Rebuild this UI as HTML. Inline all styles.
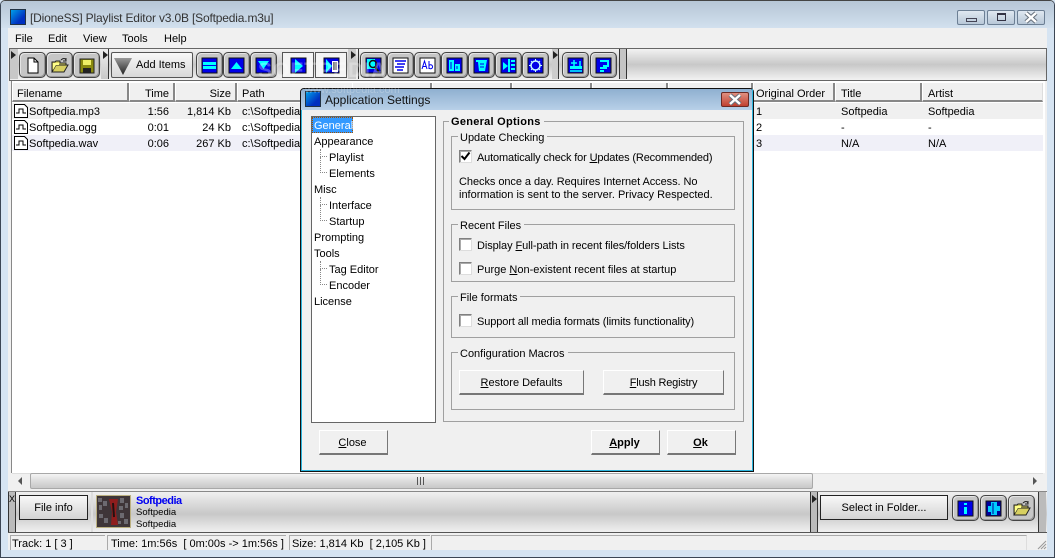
<!DOCTYPE html>
<html><head><meta charset="utf-8"><style>
html,body{margin:0;padding:0;width:1055px;height:558px;overflow:hidden;background:#d6e4f2}
*{box-sizing:border-box}
div,span.t,svg{position:absolute}
.t{position:absolute;white-space:pre;font:11px/13px "Liberation Sans",sans-serif;color:#000;margin-top:2px}
.r{text-align:right}
.c{text-align:center}
.b{font-weight:bold}
u{text-decoration:underline}
.rb{width:27px;height:26px;top:52px;border:1px solid #444;border-radius:5px;background:#c6c6c6;box-shadow:inset 1px 1px 0 #e4e4e4,inset -1px -1px 0 #999}
.sb{height:26px;top:52px;border:1px solid #555;background:linear-gradient(#f8f8f8,#d8d8d8)}
.ic{position:absolute;left:4px;top:4px}
.hd{top:83px;height:19px;background:#f0f0f0;border-right:2px solid #888;border-left:1px solid #fff;border-bottom:2px solid #888}
.grp{border:1px solid #a0a0a0;background:#f0f0f0}
.lab{background:#f0f0f0;padding:0 3px 0 2px;position:absolute}
.btn{background:#f0f0f0;border:1px solid #fff;border-right:1px solid #777;border-bottom:2px solid #777}
.cb{width:13px;height:13px;background:#fff;border:1px solid #808080;border-right-color:#ddd;border-bottom-color:#ddd;box-shadow:inset 1px 1px 0 #aaa}
.grip{top:49px;height:30px;background:#c8c8c8}
.tri{width:0;height:0;border-left:5px solid #222;border-top:4px solid transparent;border-bottom:4px solid transparent}
.dot{border-left:1px dotted #888;border-bottom:1px dotted #888}
</style></head><body>
<!-- window chrome -->
<div style="left:0;top:0;width:1055px;height:558px;background:#d6e4f2;border:1px solid #3c4654;border-top:1px solid #444;border-radius:5px 5px 0 0"></div>
<div style="left:1px;top:1px;width:1053px;height:27px;background:linear-gradient(#b6c6d6,#d2e0ee);border-radius:4px 4px 0 0"></div>
<div style="left:10px;top:9px;width:16px;height:16px;background:linear-gradient(135deg,#00a0e8,#0030c0 70%);border:1px solid #234"></div>
<span class="t" style="left:30px;top:10px;font-size:12px;color:#333;letter-spacing:-.17px">[DioneSS] Playlist Editor v3.0B [Softpedia.m3u]</span>
<!-- caption buttons -->
<div style="left:957px;top:10px;width:28px;height:15px;border:1px solid #6c7f94;border-radius:2px;background:linear-gradient(#dfe8f1,#b8c8d8)"><div style="left:8px;top:7px;width:11px;height:4px;border:1px solid #445"></div></div>
<div style="left:987px;top:10px;width:28px;height:15px;border:1px solid #6c7f94;border-radius:2px;background:linear-gradient(#dfe8f1,#b8c8d8)"><div style="left:9px;top:2px;width:9px;height:8px;border:1px solid #334;border-top-width:2px"></div></div>
<div style="left:1017px;top:10px;width:28px;height:15px;border:1px solid #6c7f94;border-radius:2px;background:linear-gradient(#dfe8f1,#b8c8d8)"><svg width="26" height="13" style="left:0;top:0"><path d="M8 2l10 9M18 2L8 11" stroke="#66707c" stroke-width="4.400"/><path d="M8 2l10 9M18 2L8 11" stroke="#fff" stroke-width="2.400" fill="none"/></svg></div>
<!-- client -->
<div style="left:8px;top:28px;width:1039px;height:522px;background:#f0f0f0"></div>
<span class="t" style="left:15px;top:31px">File</span>
<span class="t" style="left:48px;top:31px">Edit</span>
<span class="t" style="left:83px;top:31px">View</span>
<span class="t" style="left:122px;top:31px">Tools</span>
<span class="t" style="left:164px;top:31px">Help</span>
<!-- toolbar -->
<div style="left:9px;top:48px;width:1038px;height:33px;border:1px solid #666;background:linear-gradient(#f2f2f2,#c8c8c8 50%,#f2f2f2)"></div>
<div class="grip" style="left:10px;width:8px"></div><div class="tri" style="left:11px;top:51px"></div>
<div class="grip" style="left:101px;width:7px;background:linear-gradient(#eee,#c8c8c8)"></div><div class="tri" style="left:103px;top:51px"></div>
<div class="grip" style="left:348px;width:8px;background:#ccc"></div><div class="tri" style="left:351px;top:51px"></div>
<div class="grip" style="left:552px;width:7px;background:#ccc"></div><div class="tri" style="left:553px;top:51px"></div>
<div style="left:108px;top:49px;width:1px;height:30px;background:#333"></div>
<div style="left:358px;top:49px;width:1px;height:30px;background:#333"></div>
<div style="left:558px;top:49px;width:1px;height:30px;background:#333"></div>
<div style="left:619px;top:49px;width:1px;height:30px;background:#333"></div>
<div style="left:626px;top:49px;width:1px;height:30px;background:#333"></div>
<div style="left:620px;top:49px;width:6px;height:30px;background:#c4c4c4"></div>

<div class="rb" style="left:19px"><svg class="ic" width="17" height="17"><path d="M4 1h6l4 4v11H4z" fill="#fff" stroke="#000"/><path d="M10 1v4h4" fill="none" stroke="#000"/></svg></div>
<div class="rb" style="left:46px"><svg class="ic" width="18" height="17"><path d="M1 15V5h3l1-1h4v2h6v2H5L1 15h12l4-7H5" fill="#d8d060" stroke="#222"/><path d="M2 6h6v2H5l-3 5z" fill="#ff8"/><path d="M10 3c2-2 4-2 5 0M15 1v3h-3" fill="none" stroke="#222"/></svg></div>
<div class="rb" style="left:73px"><svg class="ic" width="17" height="17"><rect x="2" y="2" width="14" height="14" fill="#8a8a10" stroke="#222"/><rect x="5" y="3" width="8" height="5" fill="#ee6"/><rect x="5" y="11" width="8" height="5" fill="#222"/></svg></div>
<div class="sb" style="left:111px;width:82px;border-radius:2px"></div>
<svg width="20" height="18" style="left:114px;top:57px"><defs><linearGradient id="g" x1="0" y1="0" x2="0" y2="1"><stop offset="0" stop-color="#999"/><stop offset="1" stop-color="#222"/></linearGradient></defs><path d="M0 1h18l-9 17z" fill="url(#g)"/></svg>
<span class="t" style="left:136px;top:57px">Add Items</span>

<div class="rb" style="left:196px"><svg class="ic" width="17" height="17"><rect x="1" y="1" width="15" height="15" fill="#0000e8" stroke="#111"/><rect x="2" y="5" width="13" height="3" fill="#0ff"/><rect x="2" y="9" width="13" height="3" fill="#0ff"/></svg></div>
<div class="rb" style="left:223px"><svg class="ic" width="17" height="17"><rect x="1" y="1" width="15" height="15" fill="#0000e8" stroke="#111"/><path d="M3 12L8.500 5 14 12z" fill="#0ff"/></svg></div>
<div class="rb" style="left:250px"><svg class="ic" width="17" height="17"><rect x="1" y="1" width="15" height="15" fill="#0000e8" stroke="#111"/><path d="M3 4h11l-5.500 8z" fill="#0ff"/></svg></div>
<div class="sb" style="left:282px;width:32px;background:#f4f4f4"><svg class="ic" style="left:7px" width="17" height="17"><rect x="1" y="1" width="15" height="15" fill="#0000e8" stroke="#111"/><path d="M5 2l8 7-8 7z" fill="#0ff"/></svg></div>
<div class="sb" style="left:315px;width:32px;background:#f4f4f4"><svg class="ic" style="left:7px" width="17" height="17"><rect x="1" y="1" width="15" height="15" fill="#0000e8" stroke="#111"/><path d="M3 2l6 7-6 7z" fill="#0ff"/><rect x="9" y="4" width="6" height="11" fill="#fff"/><path d="M10 6h4M10 8h4M10 10h4M10 12h4" stroke="#000"/></svg></div>

<div class="rb" style="left:360px"><svg class="ic" width="17" height="17"><rect x="1" y="1" width="15" height="15" fill="#0000e8" stroke="#111"/><rect x="2" y="2" width="8" height="10" fill="#0ff"/><circle cx="8" cy="7" r="3.500" fill="none" stroke="#111" stroke-width="1.500"/><path d="M10 10l4 5" stroke="#111" stroke-width="2"/></svg></div>
<div class="rb" style="left:387px"><svg class="ic" width="17" height="17"><rect x="1" y="1" width="15" height="15" fill="#fff" stroke="#111"/><path d="M3 4h11M5 7h8M3 10h9M5 13h6" stroke="#00e" stroke-width="1.500"/></svg></div>
<div class="rb" style="left:414px"><svg class="ic" width="17" height="17"><rect x="1" y="1" width="15" height="15" fill="#fff" stroke="#111"/><path d="M3 12L5.500 4 8 12M4 9.500h3M10 4v8M10 8.500a2 2 0 1 1 0 2.500" fill="none" stroke="#00e"/></svg></div>
<div class="rb" style="left:441px"><svg class="ic" width="17" height="17"><rect x="1" y="1" width="15" height="15" fill="#0000e8" stroke="#111"/><rect x="3" y="3" width="5" height="11" fill="#0ff"/><rect x="9" y="7" width="5" height="7" fill="#0ff"/><path d="M5 5v7M11 9v3" stroke="#00e"/></svg></div>
<div class="rb" style="left:468px"><svg class="ic" width="17" height="17"><rect x="1" y="1" width="15" height="15" fill="#0000e8" stroke="#111"/><path d="M3 3h11l-2 11H6L5 5H3z" fill="#0ff"/><path d="M7 7h4M7 10h4" stroke="#00e"/></svg></div>
<div class="rb" style="left:495px"><svg class="ic" width="17" height="17"><rect x="1" y="1" width="15" height="15" fill="#0000e8" stroke="#111"/><path d="M3 5l5 4-5 4z" fill="#0ff"/><path d="M9 2v13M11 4h4M11 8h4M11 12h4" stroke="#0ff" stroke-width="2"/></svg></div>
<div class="rb" style="left:522px"><svg class="ic" width="17" height="17"><rect x="1" y="1" width="15" height="15" fill="#0000e8" stroke="#111"/><circle cx="8.500" cy="8.500" r="4.500" fill="none" stroke="#cff" stroke-width="1.500"/><path d="M8.500 2v2M8.500 13v2M2 8.500h2M13 8.500h2M4 4l1 1M12 12l1 1M13 4l-1 1M4 13l1-1" stroke="#cff"/></svg></div>
<div class="rb" style="left:562px"><svg class="ic" width="17" height="17"><rect x="1" y="1" width="15" height="15" fill="#0000e8" stroke="#111"/><rect x="3" y="9" width="12" height="3" fill="#0ff"/><path d="M7 3v6M4 6h6M13 4v5M3 14h12" stroke="#0ff" stroke-width="1.500"/></svg></div>
<div class="rb" style="left:590px"><svg class="ic" width="17" height="17"><rect x="1" y="1" width="15" height="15" fill="#0000e8" stroke="#111"/><path d="M5 4h8v5H8M5 11h7M5 14h4" fill="none" stroke="#0ff" stroke-width="2"/></svg></div>
<span class="t b" style="left:258px;top:58px;font-size:21px;line-height:22px;color:rgba(255,255,255,.28);letter-spacing:1px">SOFTPEDIA</span>

<!-- list -->
<div style="left:11px;top:81px;width:1034px;height:392px;background:#fff;border-left:1px solid #888"></div>
<div class="hd" style="left:12px;width:117px"></div><span class="t" style="left:17px;top:86px">Filename</span>
<div class="hd" style="left:129px;width:46px"></div><span class="t r" style="left:129px;top:86px;width:40px">Time</span>
<div class="hd" style="left:175px;width:62px"></div><span class="t r" style="left:175px;top:86px;width:56px">Size</span>
<div class="hd" style="left:237px;width:800px"></div><span class="t" style="left:242px;top:86px">Path</span>
<div class="hd" style="left:352px;width:80px"></div><div class="hd" style="left:432px;width:80px"></div><div class="hd" style="left:512px;width:80px"></div><div class="hd" style="left:592px;width:76px"></div><div class="hd" style="left:668px;width:85px"></div>
<div class="hd" style="left:753px;width:82px"></div><span class="t" style="left:756px;top:86px">Original Order</span>
<div class="hd" style="left:835px;width:87px"></div><span class="t" style="left:841px;top:86px">Title</span>
<div class="hd" style="left:922px;width:121px;border-right:1px solid #ddd"></div><span class="t" style="left:928px;top:86px">Artist</span>
<div style="left:12px;top:103px;width:1031px;height:16px;background:#f0f0f0"></div>
<div style="left:12px;top:135px;width:1031px;height:16px;background:#f0f0f8"></div>
<svg width="15" height="48" style="left:14px;top:103px"><g fill="#fff" stroke="#000"><path d="M.5 1.500h10l3 3v10H.5z"/><path d="M.5 17.500h10l3 3v10H.5z"/><path d="M.5 33.500h10l3 3v10H.5z"/></g><path d="M2 10h3V6h4v4h3M2 26h3v-4h4v4h3M2 42h3v-4h4v4h3" fill="none" stroke="#000"/></svg>
<span class="t" style="left:29px;top:104px">Softpedia.mp3</span><span class="t r" style="left:129px;top:104px;width:40px">1:56</span><span class="t r" style="left:175px;top:104px;width:56px">1,814 Kb</span><span class="t" style="left:242px;top:104px">c:\Softpedia</span>
<span class="t" style="left:29px;top:120px">Softpedia.ogg</span><span class="t r" style="left:129px;top:120px;width:40px">0:01</span><span class="t r" style="left:175px;top:120px;width:56px">24 Kb</span><span class="t" style="left:242px;top:120px">c:\Softpedia</span>
<span class="t" style="left:29px;top:136px">Softpedia.wav</span><span class="t r" style="left:129px;top:136px;width:40px">0:06</span><span class="t r" style="left:175px;top:136px;width:56px">267 Kb</span><span class="t" style="left:242px;top:136px">c:\Softpedia</span>
<span class="t" style="left:756px;top:104px">1</span><span class="t" style="left:841px;top:104px">Softpedia</span><span class="t" style="left:928px;top:104px">Softpedia</span>
<span class="t" style="left:756px;top:120px">2</span><span class="t" style="left:841px;top:120px">-</span><span class="t" style="left:928px;top:120px">-</span>
<span class="t" style="left:756px;top:136px">3</span><span class="t" style="left:841px;top:136px">N/A</span><span class="t" style="left:928px;top:136px">N/A</span>
<!-- scrollbar -->
<div style="left:12px;top:473px;width:1031px;height:17px;background:#f0f0f0;border-top:1px solid #ddd"></div>
<div style="left:30px;top:473px;width:783px;height:16px;background:linear-gradient(#f4f4f4,#dcdcdc 50%,#c8c8c8);border:1px solid #a8a8a8;border-radius:2px"></div>
<svg width="12" height="10" style="left:416px;top:476px"><path d="M1.500 1v8M4.500 1v8M7.500 1v8" stroke="#555"/></svg>
<div style="left:18px;top:477px;border-right:4px solid #555;border-top:4px solid transparent;border-bottom:4px solid transparent"></div>
<div style="left:1033px;top:477px;border-left:4px solid #555;border-top:4px solid transparent;border-bottom:4px solid transparent"></div>
<!-- bottom bar -->
<div style="left:8px;top:491px;width:1039px;height:42px;background:linear-gradient(#f0f0f0,#c8c8c8 55%,#f0f0f0);border-top:1px solid #888;border-bottom:1px solid #555"></div>
<div style="left:8px;top:492px;width:8px;height:40px;background:#bbb;border-right:1px solid #333;border-left:1px solid #333"></div>
<span class="t" style="left:9px;top:491px;font-size:9px">X</span>
<div style="left:91px;top:492px;width:2px;height:40px;background:#ddd"></div>
<div style="left:19px;top:495px;width:69px;height:25px;border:1px solid #222;background:linear-gradient(#f8f8f8,#d4d4d4)"></div>
<span class="t c" style="left:19px;top:500px;width:69px">File info</span>
<svg width="35" height="33" style="left:96px;top:495px"><rect x=".5" y=".5" width="34" height="32" fill="#3e3538" stroke="#bbb080"/><g fill="#6c6a70"><rect x="2" y="3" width="4" height="4"/><rect x="7" y="6" width="4" height="5"/><rect x="3" y="10" width="3" height="5"/><rect x="24" y="3" width="4" height="5"/><rect x="29" y="8" width="3" height="5"/><rect x="23" y="11" width="4" height="4"/><rect x="3" y="19" width="4" height="4"/><rect x="8" y="23" width="4" height="5"/><rect x="24" y="18" width="4" height="5"/><rect x="28" y="24" width="4" height="5"/><rect x="22" y="26" width="3" height="3"/></g><path d="M13 4h9l-2 13 2 13h-7l1-13z" fill="#8f1d1d"/><path d="M17 8l1 14" stroke="#211" stroke-width="2"/></svg>
<span class="t b" style="left:136px;top:493px;color:#0000f0;letter-spacing:-.5px">Softpedia</span>
<span class="t" style="left:136px;top:504px;font-size:9.500px">Softpedia</span>
<span class="t" style="left:136px;top:516px;font-size:9.500px">Softpedia</span>
<div style="left:810px;top:492px;width:8px;height:40px;background:#bbb;border-left:1px solid #333;border-right:1px solid #333"></div><div class="tri" style="left:812px;top:495px"></div>
<div style="left:820px;top:495px;width:128px;height:25px;border:1px solid #222;background:linear-gradient(#f8f8f8,#d4d4d4)"></div>
<span class="t c" style="left:820px;top:500px;width:128px">Select in Folder...</span>
<div class="rb" style="left:952px;top:495px"><svg class="ic" width="17" height="17"><rect x="1" y="1" width="15" height="15" fill="#0000e8" stroke="#111"/><path d="M7 3h3v2H7zM7 7h3v7H7z" fill="#0ff"/></svg></div>
<div class="rb" style="left:980px;top:495px"><svg class="ic" width="17" height="17"><rect x="1" y="1" width="15" height="15" fill="#00009a" stroke="#111"/><path d="M6 2h6v4h3v5h-3v4H6v-3H3V6h3z" fill="#0cf"/><path d="M8 3v11" stroke="#00009a" stroke-width="1"/></svg></div>
<div class="rb" style="left:1008px;top:495px"><svg class="ic" width="18" height="17"><path d="M1 15V5h3l1-1h4v2h6v2H5L1 15h12l4-7H5" fill="#d8d060" stroke="#222"/><path d="M2 6h6v2H5l-3 5z" fill="#ff8"/><path d="M10 3c2-2 4-2 5 0M15 1v3h-3" fill="none" stroke="#222"/></svg></div>
<div style="left:1038px;top:492px;width:8px;height:40px;background:#bbb;border-left:1px solid #333"></div>
<!-- status -->
<div style="left:10px;top:535px;width:95px;height:15px;border-top:1px solid #aaa;border-left:1px solid #aaa"></div>
<div style="left:107px;top:535px;width:179px;height:15px;border-top:1px solid #aaa;border-left:1px solid #aaa"></div>
<div style="left:289px;top:535px;width:141px;height:15px;border-top:1px solid #aaa;border-left:1px solid #aaa"></div>
<div style="left:431px;top:535px;width:596px;height:15px;border-top:1px solid #aaa;border-left:1px solid #aaa;border-right:1px solid #ddd"></div>
<span class="t" style="left:12px;top:536px">Track: 1 [ 3 ]</span>
<span class="t" style="left:111px;top:536px">Time: 1m:56s  [ 0m:00s -&gt; 1m:56s ]</span>
<span class="t" style="left:292px;top:536px">Size: 1,814 Kb  [ 2,105 Kb ]</span>
<svg width="10" height="10" style="left:1037px;top:540px"><path d="M9 1L1 9M9 4L4 9M9 7L7 9" stroke="#999"/></svg>

<!-- dialog -->
<div style="left:300px;top:88px;width:454px;height:384px;background:#f0f0f0;border:1px solid #111;border-radius:4px 4px 0 0"></div>
<div style="left:301px;top:89px;width:452px;height:21px;background:linear-gradient(#8fb0d0,#b8d0e8);border-radius:3px 3px 0 0"></div>
<div style="left:301px;top:110px;width:1px;height:361px;background:#2cb4dc"></div>
<div style="left:752px;top:89px;width:1px;height:382px;background:#2cb4dc"></div>
<div style="left:301px;top:470px;width:452px;height:1px;background:#2cb4dc"></div>
<div style="left:305px;top:91px;width:16px;height:16px;background:linear-gradient(135deg,#00a0e8,#0030c0 70%);border:1px solid #234"></div>
<span class="t" style="left:325px;top:92px;font-size:12px;color:#111">Application Settings</span>
<span class="t" style="left:305px;top:82px;font-size:11px;color:rgba(255,255,255,.25)">www.softpedia.com</span>
<div style="left:721px;top:92px;width:28px;height:15px;border:1px solid #6a2a24;border-radius:2px;background:linear-gradient(#e09080,#c04030)"><svg width="26" height="13" style="left:0;top:0"><path d="M8 2l10 9M18 2L8 11" stroke="#66707c" stroke-width="4.400"/><path d="M8 2l10 9M18 2L8 11" stroke="#fff" stroke-width="2.400" fill="none"/></svg></div>
<!-- tree -->
<div style="left:311px;top:116px;width:125px;height:307px;background:#fff;border:1px solid #666"></div>
<div style="left:312px;top:117px;width:41px;height:16px;background:#3399ff;outline:1px dotted #a05000;outline-offset:-1px"></div>
<span class="t" style="left:314px;top:118px;color:#fff">General</span>
<span class="t" style="left:314px;top:134px">Appearance</span>
<div class="dot" style="left:320px;top:149px;width:7px;height:8px"></div><div class="dot" style="left:320px;top:157px;width:7px;height:16px"></div>
<span class="t" style="left:329px;top:150px">Playlist</span><span class="t" style="left:329px;top:166px">Elements</span>
<span class="t" style="left:314px;top:182px">Misc</span>
<div class="dot" style="left:320px;top:197px;width:7px;height:8px"></div><div class="dot" style="left:320px;top:205px;width:7px;height:16px"></div>
<span class="t" style="left:329px;top:198px">Interface</span><span class="t" style="left:329px;top:214px">Startup</span>
<span class="t" style="left:314px;top:230px">Prompting</span>
<span class="t" style="left:314px;top:246px">Tools</span>
<div class="dot" style="left:320px;top:261px;width:7px;height:8px"></div><div class="dot" style="left:320px;top:269px;width:7px;height:16px"></div>
<span class="t" style="left:329px;top:262px">Tag Editor</span><span class="t" style="left:329px;top:278px">Encoder</span>
<span class="t" style="left:314px;top:294px">License</span>
<!-- groups -->
<div class="grp" style="left:443px;top:121px;width:301px;height:301px"></div>
<span class="t b lab" style="left:449px;top:114px;letter-spacing:.27px">General Options</span>
<div class="grp" style="left:451px;top:136px;width:284px;height:74px"></div>
<span class="t lab" style="left:458px;top:130px">Update Checking</span>
<div class="cb" style="left:459px;top:150px"></div>
<svg width="11" height="11" style="left:460px;top:151px"><path d="M1.500 5l3 3 5-6.500" fill="none" stroke="#000" stroke-width="2"/></svg>
<span class="t" style="left:477px;top:150px;letter-spacing:-.15px">Automatically check for <u>U</u>pdates (Recommended)</span>
<span class="t" style="left:459px;top:174px;letter-spacing:-.06px">Checks once a day. Requires Internet Access. No</span>
<span class="t" style="left:459px;top:187px">information is sent to the server. Privacy Respected.</span>
<div class="grp" style="left:451px;top:224px;width:284px;height:58px"></div>
<span class="t lab" style="left:458px;top:218px">Recent Files</span>
<div class="cb" style="left:459px;top:238px"></div>
<span class="t" style="left:477px;top:238px;letter-spacing:-.08px">Display <u>F</u>ull-path in recent files/folders Lists</span>
<div class="cb" style="left:459px;top:262px"></div>
<span class="t" style="left:477px;top:262px">Purge <u>N</u>on-existent recent files at startup</span>
<div class="grp" style="left:451px;top:296px;width:284px;height:42px"></div>
<span class="t lab" style="left:458px;top:290px">File formats</span>
<div class="cb" style="left:459px;top:314px"></div>
<span class="t" style="left:477px;top:314px;letter-spacing:-.1px">Support all media formats (limits functionality)</span>
<div class="grp" style="left:451px;top:352px;width:284px;height:58px"></div>
<span class="t lab" style="left:458px;top:346px">Configuration Macros</span>
<div class="btn" style="left:459px;top:370px;width:125px;height:25px"></div>
<span class="t c" style="left:459px;top:375px;width:125px"><u>R</u>estore Defaults</span>
<div class="btn" style="left:603px;top:370px;width:121px;height:25px"></div>
<span class="t c" style="left:603px;top:375px;width:121px;letter-spacing:-.2px"><u>F</u>lush Registry</span>
<div class="btn" style="left:319px;top:430px;width:69px;height:25px"></div>
<span class="t c" style="left:319px;top:435px;width:67px"><u>C</u>lose</span>
<div class="btn" style="left:591px;top:430px;width:69px;height:25px"></div>
<span class="t c b" style="left:591px;top:435px;width:67px"><u>A</u>pply</span>
<div class="btn" style="left:667px;top:430px;width:69px;height:25px"></div>
<span class="t c b" style="left:667px;top:435px;width:67px"><u>O</u>k</span>
</body></html>
